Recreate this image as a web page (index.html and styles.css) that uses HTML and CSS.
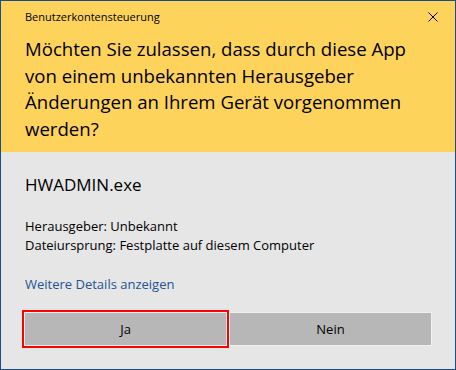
FILE: index.html
```html
<!DOCTYPE html>
<html lang="de">
<head>
    <meta charset="UTF-8">
    <meta name="viewport" content="width=device-width, initial-scale=1.0">
    <title>Benutzerkontensteuerung</title>
    <link rel="stylesheet" href="styles.css">
</head>
<body>
    <div class="dialog">
        <div class="header">
            <div class="title-row">
                <span class="title">Benutzerkontensteuerung</span>
                <svg class="close" width="10" height="10" viewBox="0 0 10 10">
                    <path d="M0.5 0.5 L9.5 9.5 M9.5 0.5 L0.5 9.5" stroke="#000" stroke-width="1" fill="none"/>
                </svg>
            </div>
            <h1>Möchten Sie zulassen, dass durch diese App<br>von einem unbekannten Herausgeber<br>Änderungen an Ihrem Gerät vorgenommen<br>werden?</h1>
        </div>

        <div class="content">
            <div class="app-name">HWADMIN.exe</div>

            <div class="info">
                <div>Herausgeber: Unbekannt</div>
                <div>Dateiursprung: Festplatte auf diesem Computer</div>
            </div>

            <a class="details" href="#">Weitere Details anzeigen</a>

            <div class="button-group">
                <button class="focused">Ja</button>
                <button>Nein</button>
            </div>
        </div>
    </div>
</body>
</html>
```

FILE: styles.css
```css
/* UAC Dialog */
body {
    margin: 0;
    font-family: 'Open Sans', 'Noto Sans', sans-serif;
    color: #000;
}

.dialog {
    width: 456px;
    height: 370px;
    box-sizing: border-box;
    border: 1px solid #1a4c8c;
    background-color: #e6e6e6;
    display: flex;
    flex-direction: column;
}

.header {
    background-color: #fed35c;
    padding: 8px 17px 10px 24px;
}

.title-row {
    display: flex;
    justify-content: space-between;
    align-items: center;
    height: 16px;
}

.title {
    font-size: 11px;
    line-height: 16px;
}

.close {
    display: block;
}

h1 {
    margin: 11px 0 0 0;
    font-weight: normal;
    font-size: 18.6px;
    line-height: 26.5px;
}

.content {
    padding: 22px 23px 0 23px;
    display: flex;
    flex-direction: column;
    align-items: flex-start;
}

.app-name {
    font-size: 17px;
    line-height: 22px;
    padding-left: 1px;
}

.info {
    margin-top: 21px;
    font-size: 13px;
    line-height: 19px;
    padding-left: 1px;
}

.details {
    margin-top: 20px;
    font-size: 13px;
    line-height: 19px;
    color: #1c5395;
    text-decoration: none;
    padding-left: 1px;
}

.button-group {
    margin-top: 18px;
    display: flex;
    gap: 2px;
    width: 100%;
}

button {
    flex: 1;
    height: 34px;
    background-color: #b7b7b7;
    border: 1px solid #f0f0f0;
    font-family: inherit;
    font-size: 13px;
    color: #000;
    padding: 0;
}

button.focused {
    outline: 2px solid #ff0000;
    outline-offset: 0;
}
```
